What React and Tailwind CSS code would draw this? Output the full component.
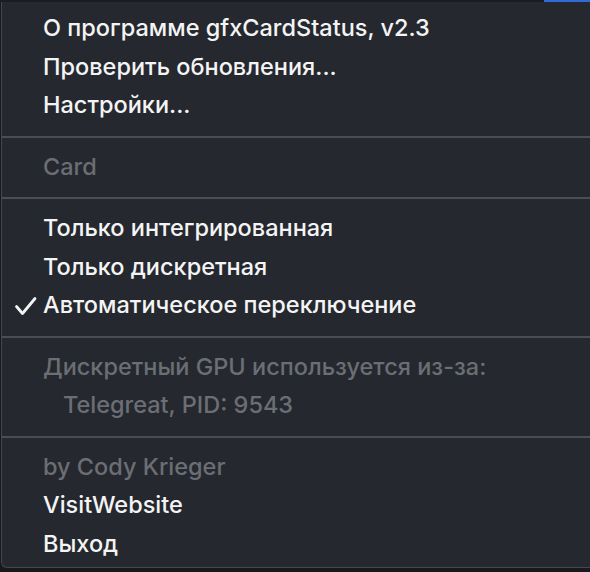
import React from "react";

const Row = ({ children, dim, checked, indent }) => (
  <div
    className={`relative flex items-center h-[38.5px] text-[23.5px] font-medium leading-[38.5px] ${
      indent ? "pl-[61px]" : "pl-[41px]"
    } ${dim ? "text-[#6b6e74]" : "text-[#f4f4f5]"}`}
  >
    {checked && (
      <svg
        className="absolute left-[12px] top-[10px]"
        width="24"
        height="20"
        viewBox="0 0 24 20"
        fill="none"
        stroke="#f4f4f5"
        strokeWidth="2.8"
        strokeLinecap="round"
        strokeLinejoin="round"
      >
        <path d="M2.5 10.5 L8.5 17.5 L21 2.5" />
      </svg>
    )}
    <span className="whitespace-nowrap">{children}</span>
  </div>
);

const Separator = () => (
  <div className="pt-[11px] pb-[10px]">
    <div className="h-[2px] bg-[#4a4d53]" />
  </div>
);

export default function App() {
  return (
    <div
      className="w-[590px] h-[572px] bg-[#18191c] overflow-hidden flex flex-col"
      style={{ fontFamily: "Inter, 'Noto Sans', sans-serif" }}
    >
      {/* top bar strip */}
      <div className="flex h-[2px] shrink-0">
        <div className="flex-1 bg-[#1b1c1f]" />
        <div className="w-[46px] bg-[#2f6cd6]" />
      </div>

      {/* menu */}
      <div className="h-[566px] ml-[1px] bg-[#25282e] border-l border-b border-[#44474d] rounded-bl-[6px] pt-[7px] antialiased">
        <Row>О программе gfxCardStatus, v2.3</Row>
        <Row>Проверить обновления...</Row>
        <Row>Настройки...</Row>
        <Separator />
        <Row dim>Card</Row>
        <Separator />
        <Row>Только интегрированная</Row>
        <Row>Только дискретная</Row>
        <Row checked>Автоматическое переключение</Row>
        <Separator />
        <Row dim>Дискретный GPU используется из-за:</Row>
        <Row dim indent>
          Telegreat, PID: 9543
        </Row>
        <Separator />
        <Row dim>by Cody Krieger</Row>
        <Row>VisitWebsite</Row>
        <Row>Выход</Row>
      </div>
    </div>
  );
}
